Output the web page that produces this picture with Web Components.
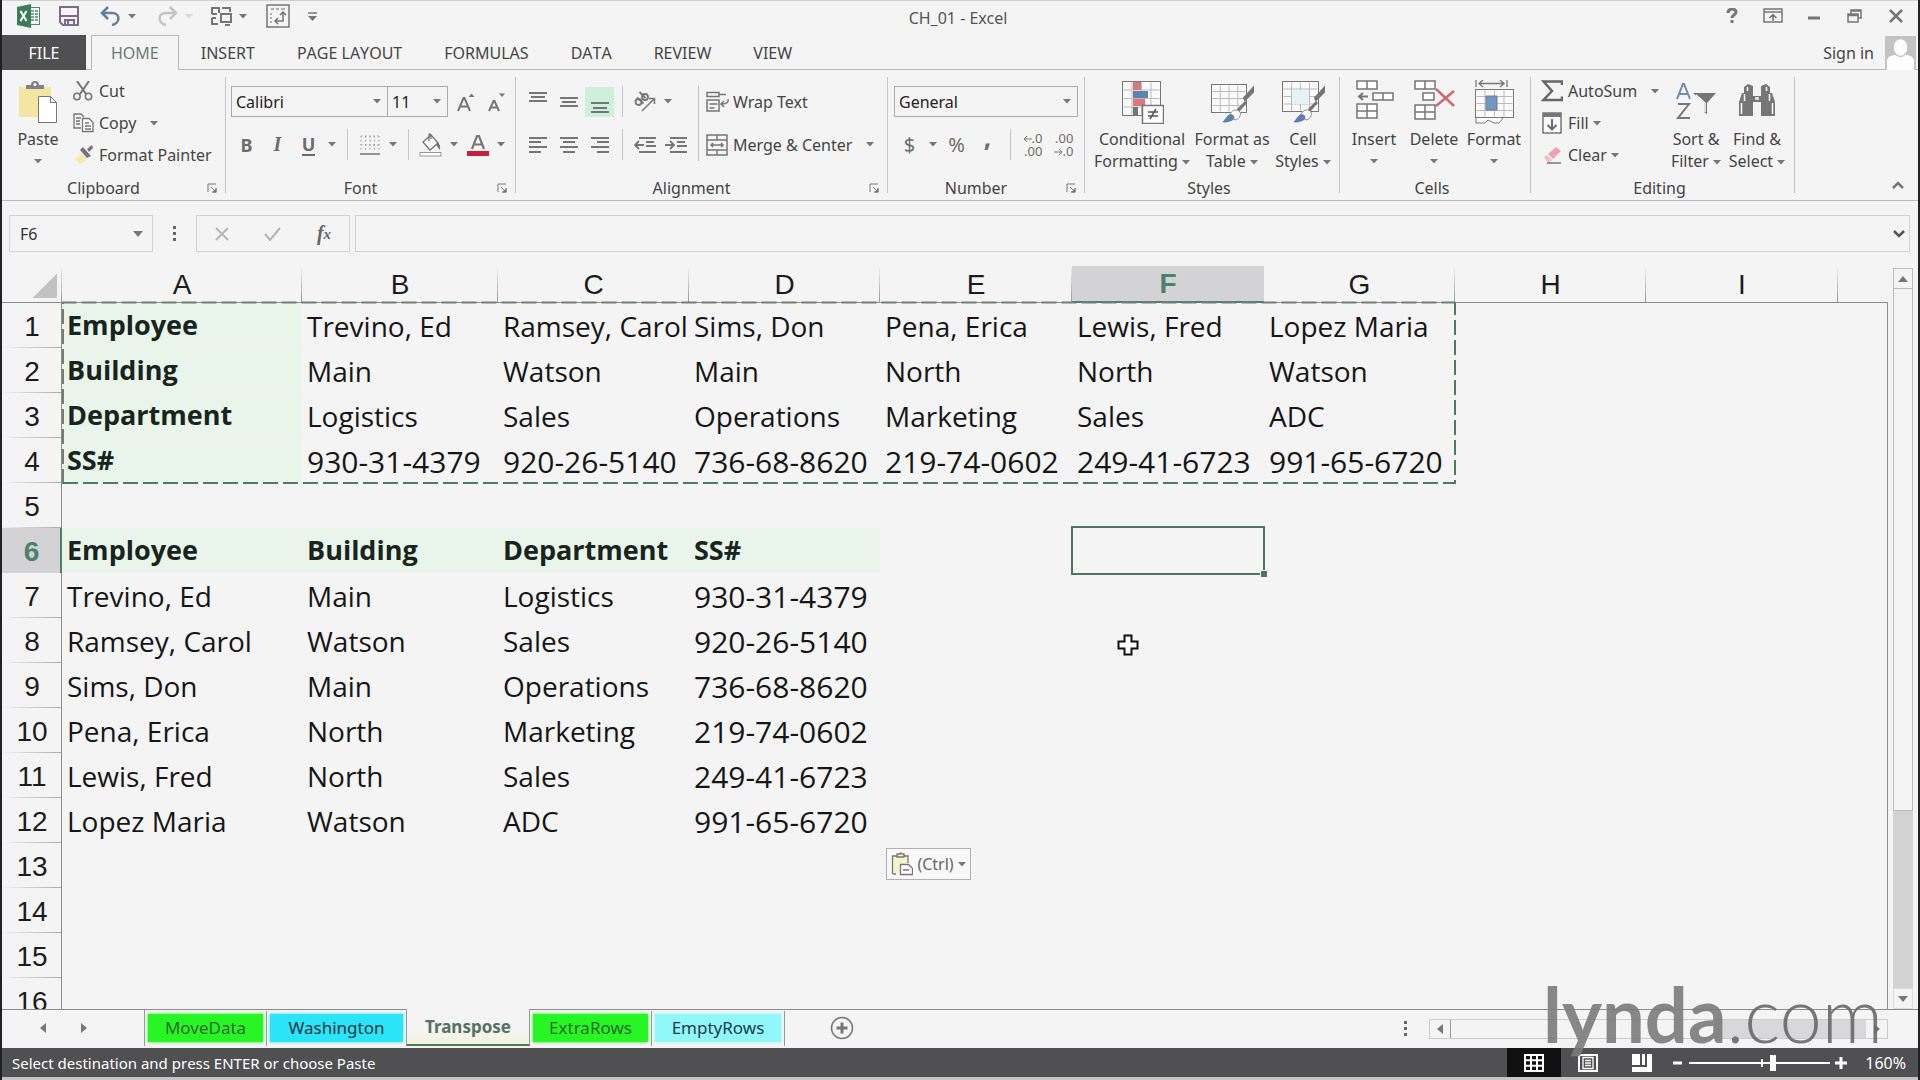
<!DOCTYPE html>
<html lang="en">
<head>
<meta charset="utf-8">
<title>CH_01 - Excel</title>
<style>
html, body { margin: 0; height: 100%; background: #f4f4f4; }
body { font: 16px/22px "Noto Sans", "Open Sans", sans-serif; color: #444; overflow: hidden; }
</style>
</head>
<body>
<xl-window>
  <xl-title-bar slot="title">CH_01 - Excel</xl-title-bar>
  <xl-tabs slot="tabs"></xl-tabs>
  <xl-ribbon slot="ribbon"></xl-ribbon>
  <xl-formula-bar slot="formula"></xl-formula-bar>
  <xl-sheet slot="sheet"></xl-sheet>
  <xl-sheet-tabs slot="sheets"></xl-sheet-tabs>
  <xl-status-bar slot="status">Select destination and press ENTER or choose Paste</xl-status-bar>
  <xl-watermark slot="mark"><b>lynda</b>.com</xl-watermark>
</xl-window>

<script>
const G = '#767676';
const brush = (c) => `<path d="M27 29l8-8 2 2-8 9z" fill="${G}"/><path d="M35 20l8-8v-4l-9 10z" fill="${G}" stroke="${G}" stroke-width="2"/><path d="M20 35c1-5 6-6 9-4s1 8-4 9z" fill="#fff" stroke="#888"/><path d="M12 42c3-1 4-7 9-8 3 1 5 4 2 6-3 2-8 3-11 2z" fill="${c}"/>`;
const grid = (x, y, w, h, nx, ny) => {
  let s = `<rect x="${x}" y="${y}" width="${w}" height="${h}" fill="#fafafa" stroke="#777"/>`;
  for (let i = 1; i < nx; i++) s += `<path d="M${x + w * i / nx} ${y + 1}v${h - 2}" stroke="#bbb"/>`;
  for (let i = 1; i < ny; i++) s += `<path d="M${x + 1} ${y + h * i / ny}h${w - 2}" stroke="#bbb"/>`;
  return s;
};
const lines = (arr) => `<path d="${arr.map(a => `M${a[0]} ${a[1]}h${a[2]}`).join('')}" stroke="${G}" stroke-width="2"/>`;
const ICONS = {
  caret: [8, 5, `<path d="M0 0h8l-4 4.500z" fill="${G}"/>`],
  excel: [24, 24, `<rect x="11.500" y="3.500" width="11" height="17" fill="#fff" stroke="#4b8a68"/><path d="M14 7h3m1 0h3M14 10h3m1 0h3M14 13h3m1 0h3M14 16h3m1 0h3" stroke="#4b8a68" stroke-width="1.500"/><path d="M0 3L14 0v24L0 21z" fill="#3d7c5a"/><path d="M3.500 7l6 10M9.500 7l-6 10" stroke="#fff" stroke-width="2"/>`],
  save: [20, 20, `<path d="M1 1h18v18H4l-3-3z" fill="none" stroke="#7d6b8e" stroke-width="2"/><path d="M2 10h16M6 19v-5h9v5M9 15v3" fill="none" stroke="#7d6b8e" stroke-width="2"/>`],
  undo: [21, 20, `<path d="M8 1L2 7l6 6" fill="none" stroke="#5b7ea8" stroke-width="2.500"/><path d="M3 7h9c9 0 8 11 0 12" fill="none" stroke="#6b7f98" stroke-width="2.500"/>`],
  redo: [21, 20, `<path d="M13 1l6 6-6 6M18 7H9C0 7 1 18 9 19" fill="none" stroke="#c4c4c4" stroke-width="2.500"/>`],
  groupobj: [22, 20, `<path d="M1 8V2h7v5M4 2h4M11 2h8v4M1 8h5M1 12v6h6M1 12h4M10 8h10v8H10zM14 19h5" fill="none" stroke="${G}" stroke-width="2"/>`],
  transp: [24, 24, `<rect x="1" y="1" width="22" height="22" fill="none" stroke="${G}" stroke-width="1.500"/><path d="M5 5h3M10 5h3M15 5h4M5 9v2M5 13v2M5 17v2" stroke="#999" stroke-width="1.500"/><path d="M17 8v9H9M14 11l3-3 3 3M12 14l-3 3 3 3" fill="none" stroke="${G}" stroke-width="1.500"/>`],
  qat: [9, 9, `<path d="M0 1h9" stroke="${G}" stroke-width="1.500"/><path d="M0 4h9l-4.500 5z" fill="${G}"/>`],
  help: [14, 16, `<path d="M3 5c0-5 8-5 8-1 0 3-4 3-4 6M7 12v3" fill="none" stroke="${G}" stroke-width="3"/>`],
  ribopt: [20, 16, `<path d="M1 1h18v13H1zM1 4h18M10 13V7M6.500 10L10 6.500l3.500 3.500" fill="none" stroke="${G}" stroke-width="1.500"/>`],
  min: [14, 16, `<path d="M1 10h12" stroke="${G}" stroke-width="3"/>`],
  restore: [16, 16, `<path d="M1 6h10v8H1zM1 7.500h10M4 6V2h10v8h-3M4 3h10" fill="none" stroke="${G}" stroke-width="1.500"/>`],
  close: [16, 16, `<path d="M2 2l12 12M14 2L2 14" stroke="${G}" stroke-width="2.500"/>`],
  user: [31, 34, `<path d="M0 0h31v34H0z" fill="#c3c3c3"/><path d="M2 34V24q1-4 7-5h13q6 1 7 5v10z" fill="#fdfdfd"/><ellipse cx="15.500" cy="11.500" rx="7.500" ry="9" fill="#fdfdfd" stroke="#c3c3c3" stroke-width="1.500"/>`],
  paste: [42, 44, `<path d="M2 7h32v30H2z" fill="#f3e6a2"/><path d="M9 9V5h5q0-4 4-4t4 4h5v4z" fill="#7d8188"/><circle cx="18" cy="4.500" r="1.500" fill="#fff"/><path d="M21.500 16.500h12l6 6v20h-18zM33.500 16.500v6h6" fill="#fff" stroke="${G}"/>`],
  cut: [20, 20, `<path d="M4 0l9 13M16 0L7 13" stroke="${G}" stroke-width="2"/><circle cx="4" cy="15.500" r="3.200" fill="none" stroke="${G}" stroke-width="1.500"/><circle cx="15.500" cy="15.500" r="3.200" fill="none" stroke="${G}" stroke-width="1.500"/>`],
  copy: [21, 20, `<path d="M8 15H1V1h7l3 3M3 5h5M3 8h4M3 11h4" fill="none" stroke="${G}" stroke-width="1.300"/><path d="M9.500 5.500H16l4 4v9H9.500zM12 10h4M12 13h6M12 16h6" fill="#fff" stroke="${G}" stroke-width="1.300"/>`],
  painter: [20, 20, `<path d="M2 14l6-6 6 7-7 4z" fill="#f2edae"/><path d="M7 5l3-3 8 9-4 2z" fill="#75727e"/><path d="M14 4l5-4 1 3-4 4z" fill="${G}"/>`],
  launch: [10, 10, `<path d="M1 9V1h8M4 4l5 5M9 5v4H5" fill="none" stroke="${G}"/><path d="M9.500 5v4.500H5z" fill="${G}"/>`],
  grow: [18, 20, `<path d="M1 19L6.500 6h1L13 19M3 14.500h8" fill="none" stroke="${G}" stroke-width="2"/><path d="M11.500 5l3-3.500 3 3.500z" fill="${G}"/>`],
  shrink: [18, 20, `<path d="M1 19l4.500-10h1L11 19M3 15.500h6.500" fill="none" stroke="${G}" stroke-width="2"/><path d="M11 1.500h6l-3 3.500z" fill="${G}"/>`],
  border: [20, 20, `<path d="M1 1h18M1 10h18M1 1v16M10 1v16M19 1v16M5.500 1v16M14.500 1v16" stroke="#999" stroke-dasharray="1.500 2.500" fill="none"/><path d="M0 19h20" stroke="${G}" stroke-width="1.500"/>`],
  fillc: [24, 24, `<path d="M4 9l8-7 7 8-8 7z" fill="#fff" stroke="${G}" stroke-width="1.300"/><path d="M10 8V2q0-2 2 0v4" fill="none" stroke="${G}" stroke-width="1.300"/><path d="M18 9q4 2 3 8l-4-5z" fill="${G}"/><rect x="1" y="19.500" width="21" height="3.500" fill="#fff" stroke="#999"/>`],
  fontc: [24, 24, `<path d="M6 16L11 3h2l5 13M8 11.500h8" fill="none" stroke="${G}" stroke-width="2.200"/><rect x="1" y="18" width="22" height="5" fill="#c8203c"/>`],
  atop: [20, 22, lines([[1, 2, 18], [3, 6, 14], [1, 10, 18]])],
  amid: [20, 22, lines([[1, 7, 18], [3, 11, 14], [1, 15, 18]])],
  abot: [20, 22, lines([[1, 12, 18], [3, 17, 14], [1, 21, 18]])],
  aleft: [20, 18, lines([[1, 2, 18], [1, 6, 12], [1, 11, 18], [1, 16, 12]])],
  acen: [20, 18, lines([[1, 2, 18], [4, 6, 12], [1, 11, 18], [4, 16, 12]])],
  aright: [20, 18, lines([[1, 2, 18], [7, 6, 12], [1, 11, 18], [7, 16, 12]])],
  orient: [24, 22, `<g fill="none" stroke="${G}" stroke-width="1.800"><circle cx="5.500" cy="11" r="3"/><path d="M4 6.500l6.500 6"/><circle cx="12" cy="6" r="3"/><path d="M6.500 1l6 6"/></g><path d="M9 20L21 8M16 7.500h5.500V13" fill="none" stroke="${G}" stroke-width="1.500"/>`],
  outd: [22, 18, lines([[5, 2, 17], [12, 6, 8], [12, 10, 10], [5, 16, 17]]) + `<path d="M10 9H1M5 5L1 9l4 4" fill="none" stroke="${G}" stroke-width="1.800"/>`],
  ind: [22, 18, lines([[5, 2, 17], [12, 6, 8], [12, 10, 10], [5, 16, 17]]) + `<path d="M0 9h8M5 5l4 4-4 4" fill="none" stroke="${G}" stroke-width="1.800"/>`],
  wrap: [23, 22, `<path d="M1 1.500h12v4H1zM13 3.500h7M1 9h12v11H1zM3.500 13h8M3.500 17h5" fill="none" stroke="${G}" stroke-width="1.500"/><path d="M22 8q1 5-6 5M18 10l-3 3 3 3" fill="none" stroke="${G}" stroke-width="1.500"/>`],
  merge: [22, 22, `<path d="M1 1h20v20H1zM11 1v5M11 16v5M1 6h20M1 16h20M5 11h12M7 9l-2 2 2 2M15 9l2 2-2 2" fill="none" stroke="${G}" stroke-width="1.500"/>`],
  cf: [44, 44, grid(2.5, 1.5, 38, 34, 4, 4) + `<rect x="13" y="2" width="8" height="8" fill="#d8777c"/><rect x="13" y="11" width="15" height="7" fill="#6083ad"/><rect x="13" y="19" width="12" height="7" fill="#d8777c"/><rect x="13" y="27" width="5" height="8" fill="${G}"/><path d="M22.500 25.500h21v18h-21z" fill="#fff" stroke="#777" stroke-width="1.500"/><path d="M28 32h10M28 36h10M36 29l-6 10" stroke="#555" stroke-width="1.500"/>`],
  fat: [44, 44, grid(1.5, 4.5, 35, 28, 4, 4) + brush('#5b83a8')],
  cst: [44, 44, grid(1.5, 1.5, 36, 30, 4, 4) + `<path d="M11 10h17v14H11z" fill="#e6f2f5"/>` + brush('#5f7bb5')],
  ins: [44, 44, `<g fill="#fff" stroke="${G}" stroke-width="1.500"><path d="M5 1h20v8H5zM15 1v8M21 13h20v7H21zM31 13v7M5 24h20v14H5zM15 24v14M5 31h20"/><path d="M16 16.500H7M11 13l-4 3.500 4 3.500" fill="none" stroke-width="2"/></g>`],
  del: [44, 44, `<g fill="#fff" stroke="${G}" stroke-width="1.500"><path d="M3 1h20v8H3zM13 1v8M11 13h11v7H11zM3 25h20v14H3zM13 25v14M3 32h20"/></g><path d="M24 9l18 17M42 11L24 26" stroke="#cf6a6a" stroke-width="2.500"/>`],
  fmt: [44, 44, `<path d="M4 0v7M35 0v7M7 3.500h25M11 0L7 3.500 11 7M28 0l4 3.500L28 7" fill="none" stroke="${G}" stroke-width="1.300"/>` + grid(3.5, 9.5, 38, 28, 4, 4) + `<path d="M14 16h11v14H14z" fill="#7297c0" stroke="#6b7a90"/><path d="M4 38v5h9l3-3 6 3h5l4-5" fill="#fff" stroke="${G}"/>`],
  sum: [22, 22, `<path d="M21 5V1.500H2.500L11 11 2.500 20H21v-3.500" fill="none" stroke="#666" stroke-width="2.500"/>`],
  fill: [20, 22, `<rect x="1" y="1" width="18" height="20" fill="#fff" stroke="${G}" stroke-width="1.500"/><path d="M1 1h18v4H1z" fill="${G}"/><path d="M10 7v10M5.500 13l4.500 4.500 4.500-4.500" fill="none" stroke="#666a80" stroke-width="2"/>`],
  clear: [20, 20, `<path d="M6 9l8-7 5 4-8 8z" fill="#eda3b5"/><path d="M2 12l3-2 5 5-2 2H5z" fill="#ecc0cb"/><path d="M5 18h14" stroke="${G}" stroke-width="1.500"/>`],
  sort: [44, 44, `<path d="M3 19L9 4h1l6 15M5.500 14h8" fill="none" stroke="#6f8ba8" stroke-width="2"/><path d="M4 24h11L4 38h12" fill="none" stroke="${G}" stroke-width="2"/><path d="M19 13h23L33 23v11l-3-2v-9z" fill="${G}"/><path d="M22 15l9 8v9" fill="none" stroke="#fff" stroke-width="1.500"/>`],
  find: [44, 44, `<path d="M4 36V22l3-9h2V7l4-3 5 2v10h8V6l5-2 4 3v6h2l3 9v14H26V22h-8v14z" fill="${G}"/><path d="M6.500 34V23M9.500 21v-7M12.500 11V7M37.500 34V23M34.500 21v-7M31.500 11V7M21 17v3M23 17v3" stroke="#fff" stroke-width="1.500"/>`],
  up: [14, 8, `<path d="M2 7l5-5 5 5" fill="none" stroke="${G}" stroke-width="2.500"/>`],
  down: [14, 8, `<path d="M2 1l5 5 5-5" fill="none" stroke="#555" stroke-width="2.500"/>`],
  dots: [4, 16, `<path d="M0 0h3v3H0zM0 6h3v3H0zM0 12h3v3H0z" fill="#666"/>`],
  x: [14, 14, `<path d="M1 1l12 12M13 1L1 13" stroke="#b5b5b5" stroke-width="1.800"/>`],
  check: [18, 14, `<path d="M1 7l5 6L16 1" fill="none" stroke="#b5b5b5" stroke-width="2"/>`],
  pasteopt: [22, 24, `<path d="M2 3h15v9H9v9H2z" fill="#f5f3cf"/><path d="M2 22h3M1.500 22V4H6M13 4h4v7M6 5V2h3q0-2 2 0h2v3z" fill="none" stroke="#777" stroke-width="1.300"/><path d="M9.500 12.500h8l4 4v6h-12zM12 18h6" fill="#fff" stroke="#777" stroke-width="1.300"/>`],
  plus: [24, 24, `<circle cx="12" cy="12" r="10.500" fill="none" stroke="${G}" stroke-width="1.500"/><path d="M12 6.500v11M6.500 12h11" stroke="${G}" stroke-width="3"/>`],
  tleft: [6, 10, `<path d="M6 0v10L0 5z" fill="#777"/>`],
  tright: [6, 10, `<path d="M0 0v10l6-5z" fill="#777"/>`],
  tup: [10, 6, `<path d="M0 6h10L5 0z" fill="#777"/>`],
  tdown: [10, 6, `<path d="M0 0h10L5 6z" fill="#777"/>`],
  vnorm: [20, 18, `<path d="M1 1h18v16H1zM7 1v16M13 1v16M1 6.300h18M1 11.700h18" fill="none" stroke="#fff" stroke-width="2"/>`],
  vpage: [20, 18, `<path d="M1 1h18v16H1z" fill="none" stroke="#fff" stroke-width="2"/><path d="M5 3.500h10v11H5zM7 6.500h6M7 9h6M7 11.500h6" fill="none" stroke="#fff" stroke-width="1.300"/>`],
  vbreak: [20, 18, `<path d="M0 0h8v11H0zM10 0h3v11h-3zM15 0h5v18H0v-5h15z" fill="#fff"/>`],
  zout: [12, 12, `<path d="M1 6h9" stroke="#fff" stroke-width="3"/>`],
  zin: [12, 12, `<path d="M0 6h12M6 0v12" stroke="#fff" stroke-width="3"/>`],
  cross: [22, 22, `<path d="M7.500 1.500h7v6h6v7h-6v6h-7v-6h-6v-7h6z" fill="#fff" stroke="#111" stroke-width="2"/>`]
};

const define = (name, html, init) => {
  const t = document.createElement('template');
  t.innerHTML = html;
  customElements.define(name, class extends HTMLElement {
    constructor() {
      super();
      this.attachShadow({ mode: 'open' }).append(t.content.cloneNode(true));
    }
    connectedCallback() { if (init) init(this, this.shadowRoot); }
  });
};

const RESET = `
  *{box-sizing:border-box}
  button,input,select{font:inherit;color:inherit;background:none;border:0;margin:0;padding:0;border-radius:0;outline:0}
  select{appearance:none}`;

define('xl-icon', `<style>:host{display:inline-flex;flex:none}svg{display:block}</style>`, (el, root) => {
  const icon = ICONS[el.getAttribute('name')];
  if (!icon || root.querySelector('svg')) return;
  const [w, h, body] = icon;
  root.innerHTML += `<svg width="${w}" height="${h}" viewBox="0 0 ${w} ${h}" aria-hidden="true">${body}</svg>`;
});

/* Compact icon-only control */
define('xl-tool', `<style>${RESET}
  :host{display:flex;flex:none;width:31px;height:30px}
  :host([caret]){width:16px}
  :host([on]){background:#cdf0dc;width:29px;margin:0 1px}
  button{flex:1;display:flex;align-items:center;justify-content:center;color:#6d6d6d;font-size:20px}
</style><button type="button"><slot></slot></button>`, (el, root) => {
  root.querySelector('button').setAttribute('aria-label', el.getAttribute('label') || 'More');
  if (el.hasAttribute('caret') && !el.childElementCount) el.innerHTML = '<xl-icon name="caret"></xl-icon>';
});

/* Labelled ribbon command, "big" puts the icon over the text */
define('xl-command', `<style>${RESET}
  :host{display:flex;flex:none}
  button{flex:1;display:flex;align-items:center;height:32px;gap:4px;white-space:nowrap}
  .i{width:24px;display:flex;justify-content:center}
  .c{display:none}
  :host([menu]) .c{display:flex}
  :host([far]) .c{margin-left:10px}
  :host([big]) button{flex-direction:column;height:auto;gap:0;text-align:center}
  :host([big]) .i{width:auto;height:53px;align-items:center}
  :host([big][menu]) .c{height:22px;align-items:center}
</style><button type="button"><span class="i"></span><span><slot></slot></span><span class="c"><xl-icon name="caret"></xl-icon></span></button>`,
  (el, root) => {
    root.querySelector('.i').innerHTML = `<xl-icon name="${el.getAttribute('icon')}"></xl-icon>`;
  });

define('xl-select', `<style>${RESET}
  :host{display:grid;flex:none;height:31px;border:1px solid #ababab;color:#222}
  select,span{grid-area:1/1;min-width:0}
  select{padding:0 20px 0 4px;width:100%}
  span{justify-self:end;align-self:center;display:flex;margin-right:6px;pointer-events:none}
</style><select></select><span><xl-icon name="caret"></xl-icon></span>`, (el, root) => {
  const s = root.querySelector('select');
  s.setAttribute('aria-label', el.getAttribute('label'));
  s.innerHTML = `<option>${el.getAttribute('value')}</option>`;
});

define('xl-sep', `<style>:host{display:flex;flex:none;width:14px;justify-content:center;align-self:stretch}i{width:1px;background:#c6c6c6}</style><i></i>`);

define('xl-group', `<style>${RESET}
  :host{display:flex;flex-direction:column;flex:none;position:relative;height:130px}
  :host::after{content:"";position:absolute;right:0;top:7px;bottom:7px;width:1px;background:#c6c6c6}
  .body{height:102px;display:flex;padding:5px 0 0 var(--pad,5px)}
  footer{display:flex;align-items:center;height:28px;padding:3px 7px 0 0}
  footer span{flex:1;text-align:center}
  button{display:none;width:14px;padding:2px;height:14px}
  :host([launcher]) button{display:flex}
</style><div class="body"><slot></slot></div><footer><span></span><button type="button" aria-label="Dialog launcher"><xl-icon name="launch"></xl-icon></button></footer>`,
  (el, root) => { root.querySelector('footer span').textContent = el.getAttribute('label'); });

define('xl-ribbon', `<style>${RESET}
  :host{display:flex;border-bottom:1px solid #b9b9b9;height:130px}
  .col{display:flex;flex-direction:column}
  .rows{display:flex;flex-direction:column;gap:12px;padding-top:11px}
  .row{display:flex;height:31px;align-items:center}
  .block{display:flex;padding:11px 0}
  .rest{flex:1;display:flex;justify-content:flex-end;align-items:flex-end;padding:0 13px 6px 0}
  .bold{font-weight:700;font-size:18px}
  .it{font:italic 700 20px "Liberation Serif",serif}
  .un{font-weight:700;font-size:18px;border-bottom:2px solid #6d6d6d;line-height:20px}
  .dec{font-size:13px;line-height:13px;text-align:right}
  .comma{font-weight:700;font-size:26px;line-height:14px;padding-bottom:16px}
</style>
<xl-group label="Clipboard" launcher style="width:224px;--pad:8px">
  <xl-command big menu icon="paste" style="width:56px">Paste</xl-command>
  <div class="col" style="padding-left:5px">
    <xl-command icon="cut">Cut</xl-command>
    <xl-command icon="copy" menu far>Copy</xl-command>
    <xl-command icon="painter">Format Painter</xl-command>
  </div>
</xl-group>
<xl-group label="Font" launcher style="width:290px">
  <div class="rows">
    <div class="row"><xl-select label="Font" value="Calibri" style="width:157px"></xl-select><xl-select label="Font size" value="11" style="width:61px;margin-left:-1px"></xl-select>
      <xl-tool label="Increase font size" style="margin-left:2px"><xl-icon name="grow"></xl-icon></xl-tool><xl-tool label="Decrease font size"><xl-icon name="shrink"></xl-icon></xl-tool></div>
    <div class="row"><xl-tool label="Bold"><span class="bold">B</span></xl-tool><xl-tool label="Italic"><span class="it">I</span></xl-tool><xl-tool label="Underline"><span class="un">U</span></xl-tool><xl-tool caret></xl-tool><xl-sep></xl-sep><xl-tool label="Borders"><xl-icon name="border"></xl-icon></xl-tool><xl-tool caret></xl-tool><xl-sep></xl-sep><xl-tool label="Fill colour"><xl-icon name="fillc"></xl-icon></xl-tool><xl-tool caret></xl-tool><xl-tool label="Font colour"><xl-icon name="fontc"></xl-icon></xl-tool><xl-tool caret></xl-tool></div>
  </div>
</xl-group>
<xl-group label="Alignment" launcher style="width:372px;--pad:6px">
  <div class="rows">
    <div class="row"><xl-tool label="Top align"><xl-icon name="atop"></xl-icon></xl-tool><xl-tool label="Middle align"><xl-icon name="amid"></xl-icon></xl-tool><xl-tool on label="Bottom align"><xl-icon name="abot"></xl-icon></xl-tool><xl-sep></xl-sep><xl-tool label="Orientation"><xl-icon name="orient"></xl-icon></xl-tool><xl-tool caret></xl-tool></div>
    <div class="row"><xl-tool label="Align left"><xl-icon name="aleft"></xl-icon></xl-tool><xl-tool label="Centre"><xl-icon name="acen"></xl-icon></xl-tool><xl-tool label="Align right"><xl-icon name="aright"></xl-icon></xl-tool><xl-sep></xl-sep><xl-tool label="Decrease indent"><xl-icon name="outd"></xl-icon></xl-tool><xl-tool label="Increase indent"><xl-icon name="ind"></xl-icon></xl-tool></div>
  </div>
  <div class="block"><xl-sep></xl-sep></div>
  <div class="rows">
    <div class="row"><xl-command icon="wrap">Wrap Text</xl-command></div>
    <div class="row"><xl-command icon="merge" menu far>Merge &amp; Center</xl-command></div>
  </div>
</xl-group>
<xl-group label="Number" launcher style="width:197px;--pad:6px">
  <div class="rows">
    <div class="row"><xl-select label="Number format" value="General" style="width:184px"></xl-select></div>
    <div class="row"><xl-tool label="Currency">$</xl-tool><xl-tool caret></xl-tool><xl-tool label="Percent">%</xl-tool><xl-tool label="Comma"><span class="comma">,</span></xl-tool><xl-sep></xl-sep><xl-tool label="Increase decimal"><span class="dec"><svg width="9" height="8"><path d="M9 4H1M4 1L1 4l3 3" fill="none" stroke="#767676"/></svg>.0<br>.00</span></xl-tool><xl-tool label="Decrease decimal"><span class="dec">.00<br><svg width="9" height="8"><path d="M0 4h8M5 1l3 3-3 3" fill="none" stroke="#767676"/></svg>.0</span></xl-tool></div>
  </div>
</xl-group>
<xl-group label="Styles" style="width:255px;--pad:9px">
  <xl-command big icon="cf" style="width:96px">Conditional<br>Formatting <xl-icon name="caret" style="vertical-align:middle"></xl-icon></xl-command>
  <xl-command big icon="fat" style="width:84px">Format as<br>Table <xl-icon name="caret" style="vertical-align:middle"></xl-icon></xl-command>
  <xl-command big icon="cst" style="width:58px">Cell<br>Styles <xl-icon name="caret" style="vertical-align:middle"></xl-icon></xl-command>
</xl-group>
<xl-group label="Cells" style="width:191px;--pad:4px">
  <xl-command big menu icon="ins" style="width:60px">Insert</xl-command>
  <xl-command big menu icon="del" style="width:60px">Delete</xl-command>
  <xl-command big menu icon="fmt" style="width:60px">Format</xl-command>
</xl-group>
<xl-group label="Editing" style="width:264px;--pad:9px">
  <div class="col" style="width:126px">
    <xl-command icon="sum" menu far>AutoSum</xl-command>
    <xl-command icon="fill" menu>Fill</xl-command>
    <xl-command icon="clear" menu>Clear</xl-command>
  </div>
  <xl-command big icon="sort" style="width:60px">Sort &amp;<br>Filter <xl-icon name="caret" style="vertical-align:middle"></xl-icon></xl-command>
  <xl-command big icon="find" style="width:62px">Find &amp;<br>Select <xl-icon name="caret" style="vertical-align:middle"></xl-icon></xl-command>
</xl-group>
<div class="rest"><button type="button" aria-label="Collapse the ribbon"><xl-icon name="up"></xl-icon></button></div>`);

define('xl-title-bar', `<style>${RESET}
  :host{display:grid;grid-template-columns:1fr auto 1fr;align-items:center;height:34px}
  .q,.w{display:flex;align-items:center}
  .q{padding:0 0 4px 15px}
  .w{justify-content:flex-end;padding:0 2px 4px 0}
  .w button{width:41px;height:30px;display:flex;align-items:center;justify-content:center}
  button{display:flex}
  h1{font:inherit;margin:0;color:#555;padding:0 4px 1px 0}
</style>
<div class="q">
  <xl-icon name="excel"></xl-icon>
  <button type="button" aria-label="Save" style="margin-left:18px"><xl-icon name="save"></xl-icon></button>
  <button type="button" aria-label="Undo" style="margin-left:21px"><xl-icon name="undo"></xl-icon></button>
  <button type="button" aria-label="Undo list" style="margin-left:7px"><xl-icon name="caret"></xl-icon></button>
  <button type="button" aria-label="Redo" style="margin-left:21px"><xl-icon name="redo"></xl-icon></button>
  <button type="button" aria-label="Redo list" style="margin-left:7px;opacity:.2"><xl-icon name="caret"></xl-icon></button>
  <button type="button" aria-label="Group" style="margin-left:18px"><xl-icon name="groupobj"></xl-icon></button>
  <button type="button" aria-label="Group list" style="margin-left:6px"><xl-icon name="caret"></xl-icon></button>
  <button type="button" aria-label="Select visible cells" style="margin-left:19px"><xl-icon name="transp"></xl-icon></button>
  <button type="button" aria-label="Customize toolbar" style="margin-left:18px"><xl-icon name="qat"></xl-icon></button>
</div>
<h1><slot></slot></h1>
<div class="w">
  <button type="button" aria-label="Help"><xl-icon name="help"></xl-icon></button>
  <button type="button" aria-label="Ribbon options"><xl-icon name="ribopt"></xl-icon></button>
  <button type="button" aria-label="Minimize"><xl-icon name="min"></xl-icon></button>
  <button type="button" aria-label="Restore"><xl-icon name="restore"></xl-icon></button>
  <button type="button" aria-label="Close"><xl-icon name="close"></xl-icon></button>
</div>`);

define('xl-tabs', `<style>${RESET}
  :host{display:flex;height:35px;box-shadow:inset 0 -1px #b9b9b9;font-kerning:none}
  nav{display:flex;gap:2px}
  button{padding:0 20px;display:flex;align-items:center;color:#444}
  .file{background:#505052;color:#fff;width:84px;padding:0;justify-content:center;margin-right:3px}
  .on{border:1px solid #b9b9b9;border-bottom:0;background:#f4f4f4;color:#6c7a72;padding:0 19px}
  .me{margin-left:auto;display:flex;align-items:center;gap:11px;padding-right:2px}
  .me button{padding:0}
</style>
<nav><button type="button" class="file">FILE</button><button type="button" class="on">HOME</button><button type="button">INSERT</button><button type="button">PAGE LAYOUT</button><button type="button">FORMULAS</button><button type="button">DATA</button><button type="button">REVIEW</button><button type="button">VIEW</button></nav>
<div class="me"><button type="button">Sign in</button><xl-icon name="user"></xl-icon></div>`);

define('xl-formula-bar', `<style>${RESET}
  :host{display:flex;align-items:center;padding:14px 8px 14px 7px;color:#333}
  .box{height:37px;border:1px solid #d2d2d2;display:flex;align-items:center}
  .name{width:144px;padding:0 9px 0 10px}
  .name input{flex:1;min-width:0}
  .dots{width:43px;display:flex;justify-content:center}
  .acts{width:154px;padding:0 11px;justify-content:space-between}
  .acts button{width:28px;height:30px;display:flex;align-items:center;justify-content:center}
  .fx{font:italic 700 20px "Liberation Serif",serif;color:#666}
  .fx sub{font-size:15px;line-height:0;vertical-align:baseline}
  .in{flex:1;margin-left:5px;padding:0 3px 4px 0}
  .in input{flex:1}
</style>
<div class="box name"><input aria-label="Name box" value="F6"><xl-icon name="tdown"></xl-icon></div>
<span class="dots"><xl-icon name="dots"></xl-icon></span>
<div class="box acts"><button type="button" aria-label="Cancel"><xl-icon name="x"></xl-icon></button><button type="button" aria-label="Enter"><xl-icon name="check"></xl-icon></button><button type="button" class="fx" aria-label="Insert function">f<sub>x</sub></button></div>
<div class="box in"><input aria-label="Formula"><button type="button" aria-label="Expand"><xl-icon name="down"></xl-icon></button></div>`);

const SHEET = [
  ['*Employee', 'Trevino, Ed', 'Ramsey, Carol', 'Sims, Don', 'Pena, Erica', 'Lewis, Fred', 'Lopez Maria'],
  ['*Building', 'Main', 'Watson', 'Main', 'North', 'North', 'Watson'],
  ['*Department', 'Logistics', 'Sales', 'Operations', 'Marketing', 'Sales', 'ADC'],
  ['*SS#', '930-31-4379', '920-26-5140', '736-68-8620', '219-74-0602', '249-41-6723', '991-65-6720'],
  [],
  ['*Employee', '*Building', '*Department', '*SS#'],
  ['Trevino, Ed', 'Main', 'Logistics', '930-31-4379'],
  ['Ramsey, Carol', 'Watson', 'Sales', '920-26-5140'],
  ['Sims, Don', 'Main', 'Operations', '736-68-8620'],
  ['Pena, Erica', 'North', 'Marketing', '219-74-0602'],
  ['Lewis, Fred', 'North', 'Sales', '249-41-6723'],
  ['Lopez Maria', 'Watson', 'ADC', '991-65-6720'],
  [], [], [], []
];

define('xl-sheet', `<style>${RESET}
  :host{display:flex;min-height:0;overflow:hidden}
  .pane{flex:1;min-width:0;position:relative;overflow:hidden}
  .pane::after{content:"";position:absolute;right:0;top:36px;bottom:0;width:1px;background:#8c8c8c}
  table{table-layout:fixed;width:100%;border-collapse:separate;border-spacing:0}
  th{font:28px/34px "Liberation Sans",Arial,sans-serif;color:#1c1c1c;padding:0;text-align:center}
  thead th{height:37px;padding-top:2px;border-bottom:1px solid #8c8c8c;background:linear-gradient(transparent,#999) right/1px 100% no-repeat}
  thead th.sel{background:#d3d3d6;border-bottom:2px solid #4f8068;color:#4f8068;font-weight:700;padding-top:1px}
  tbody th{height:45px;padding:2px 0 0 1px;border-right:1px solid #8c8c8c;background:linear-gradient(90deg,transparent,#aaa) bottom/100% 1px no-repeat}
  tbody th.sel{background:#d3d3d6;border-right:2px solid #4f8068;color:#4f8068;font-weight:700}
  thead th:first-child{padding:0;vertical-align:bottom}
  .corner{display:block;width:24px;height:24px;margin:0 5px 4px auto;background:linear-gradient(135deg,transparent 50%,#c2c2c2 50%)}
  td{font:28px/43px "Open Sans","Noto Sans",sans-serif;color:#161616;height:45px;padding:2px 0 0 5px;white-space:nowrap;position:relative}
  td.h{font-weight:700;font-size:27px;line-height:42px;padding:1px 0 1px 5px;background:#e9f5ea;border-right:1px solid #eef3ee;border-bottom:1px solid #eef3ee;color:#18241c}
  td.n{font-size:30px;line-height:42px}
  .cursor{position:absolute;inset:-2px -1px;border:2px solid #4d7362}
  .cursor::after{content:"";position:absolute;right:-4px;bottom:-4px;width:6px;height:6px;background:#4d7362;border:1px solid #f4f4f4;border-width:1px 0 0 1px;box-sizing:content-box}
  .ants{position:absolute;left:60px;top:35px;width:1394px;height:183px;overflow:visible;pointer-events:none}
  .mouse{position:absolute;left:1115px;top:368px}
  .opt{position:absolute;left:884px;top:582px;width:85px;height:32px;border:1px solid #b0b0b0;display:flex;align-items:center;justify-content:center;gap:4px;color:#666;background:#f8f8f8}
  .bar{width:30px;display:flex;flex-direction:column;padding:2px 5px 0;flex:none}
  .bar button{height:21px;border:1px solid #bbb;display:flex;align-items:center;justify-content:center;flex:none}
  .thumb{flex:523;border:1px solid #bbb;border-top:0}
  .track{flex:178;background:#d2d2d2}
  .bar .last{border-color:#ddd}
</style>
<div class="pane">
  <table><colgroup><col style="width:60px"><col style="width:240px"><col style="width:196px"><col style="width:191px"><col style="width:191px"><col style="width:192px"><col style="width:192px"><col style="width:191px"><col style="width:191px"><col style="width:192px"><col></colgroup><thead></thead><tbody></tbody></table>
  <svg class="ants"><path d="M1 183V1.500H1393" fill="none" stroke="#6e7f76" stroke-width="2" stroke-dasharray="15 5"/><path d="M1 182H1393V1" fill="none" stroke="#4d7a63" stroke-width="2" stroke-dasharray="15 5"/></svg>
  <xl-icon class="mouse" name="cross"></xl-icon>
  <button type="button" class="opt"><xl-icon name="pasteopt"></xl-icon>(Ctrl)<xl-icon name="caret"></xl-icon></button>
</div>
<div class="bar"><button type="button" aria-label="Scroll up"><xl-icon name="tup"></xl-icon></button><div class="thumb"></div><div class="track"></div><button type="button" class="last" aria-label="Scroll down"><xl-icon name="tdown"></xl-icon></button></div>`,
  (el, root) => {
    root.querySelector('thead').innerHTML = '<tr><th><span class="corner"></span></th>' + [...'ABCDEFGHI'].map(c => `<th scope="col"${c === 'F' ? ' class="sel"' : ''}>${c}</th>`).join('') + '<th style="background:none"></th></tr>';
    root.querySelector('tbody').innerHTML = SHEET.map((r, y) => {
      let s = `<tr><th scope="row"${y === 5 ? ' class="sel"' : ''}>${y + 1}</th>`;
      for (let x = 0; x < 10; x++) {
        const v = r[x] || '';
        const cls = v[0] === '*' ? 'h' : /^\d/.test(v) ? 'n' : '';
        s += `<td class="${cls}">${v.replace('*', '')}${y === 5 && x === 5 ? '<span class="cursor"></span>' : ''}</td>`;
      }
      return s + '</tr>';
    }).join('');
  });

define('xl-sheet-tab', `<style>${RESET}
  :host{display:flex;flex:none;padding:3px 3px 4px;border-right:1px solid #999;height:35px;margin-top:1px}
  button{flex:1;background:var(--tab);color:var(--ink,#333);font-size:17px;box-shadow:0 0 3px var(--tab)}
  :host([on]){padding:0;margin-top:-1px;height:37px;border-bottom:2px solid #4d7a5a;background:#f4f4f4;border-left:1px solid #999}
  :host([on]) button{font-weight:700;color:#587060;box-shadow:none;background:linear-gradient(#f4f4f4 60%,#f2f3dc)}
</style><button type="button"><slot></slot></button>`);

define('xl-sheet-tabs', `<style>${RESET}
  :host{display:flex;height:38px;border-top:1px solid #8c8c8c;align-items:flex-start}
  .nav{width:143px;height:36px;display:flex;align-items:center;padding-left:38px;gap:35px;border-right:1px solid #999}
  .add{margin:6px 0 0 45px;display:flex}
  .right{margin-left:auto;display:flex;align-items:center;padding:9px 30px 0 0}
  .h{display:flex;width:459px;height:20px;border:1px solid #ccc;margin-left:21px}
  .h button{width:21px;display:flex;align-items:center;justify-content:center}
  .h .l{border-right:1px solid #999}
  .t{flex:265}.k{flex:152;background:#d8d8da}
</style>
<div class="nav"><xl-icon name="tleft"></xl-icon><xl-icon name="tright"></xl-icon></div>
<xl-sheet-tab style="width:122px;--tab:#27f524;--ink:#2c6b30">MoveData</xl-sheet-tab>
<xl-sheet-tab style="width:139px;--tab:#2be4f7;--ink:#1c3440;border:0">Washington</xl-sheet-tab>
<xl-sheet-tab on style="width:124px">Transpose</xl-sheet-tab>
<xl-sheet-tab style="width:122px;--tab:#27f524;--ink:#2c6b30">ExtraRows</xl-sheet-tab>
<xl-sheet-tab style="width:133px;--tab:#90f8f8;--ink:#1c3a50">EmptyRows</xl-sheet-tab>
<button type="button" class="add" aria-label="New sheet"><xl-icon name="plus"></xl-icon></button>
<div class="right"><xl-icon name="dots"></xl-icon><div class="h"><button type="button" class="l" aria-label="Scroll left"><xl-icon name="tleft"></xl-icon></button><div class="t"></div><div class="k"></div><button type="button" aria-label="Scroll right"><xl-icon name="tright"></xl-icon></button></div></div>`);

define('xl-status-bar', `<style>${RESET}
  :host{display:flex;align-items:center;height:29px;background:#505052;color:#fff;border-bottom:3px solid #c4c4c4;padding-left:10px}
  .msg{flex:1;font-size:15px;font-kerning:none}
  .v{width:54px;height:29px;display:flex;align-items:center;justify-content:center}
  .on{background:#111}
  input{appearance:none;width:141px;height:20px;margin:0 2px;background:linear-gradient(#fff,#fff) center/100% 2px no-repeat,linear-gradient(#fff,#fff) 72px 50%/2px 8px no-repeat}
  input::-webkit-slider-thumb{appearance:none;width:6px;height:16px;background:#fff}
  .z{width:18px;height:20px;display:flex;align-items:center;justify-content:center}
  .p{width:68px;text-align:right;padding-right:12px;}
</style>
<span class="msg"><slot></slot></span>
<button type="button" class="v on" aria-label="Normal view"><xl-icon name="vnorm"></xl-icon></button><button type="button" class="v" aria-label="Page layout view"><xl-icon name="vpage"></xl-icon></button><button type="button" class="v" aria-label="Page break view"><xl-icon name="vbreak"></xl-icon></button>
<button type="button" class="z" aria-label="Zoom out"><xl-icon name="zout"></xl-icon></button><input type="range" min="0" max="100" value="60" aria-label="Zoom"><button type="button" class="z" aria-label="Zoom in"><xl-icon name="zin"></xl-icon></button><span class="p">160%</span>`);

define('xl-watermark', `<style>
  :host{display:block;position:absolute;right:35px;bottom:28px;font:300 76px/76px Lato,sans-serif;color:#6a6a6a;opacity:.9;pointer-events:none}
  ::slotted(b){font-weight:700;color:#7c7c7c}
</style><slot></slot>`);

define('xl-window', `<style>
  :host{display:flex;flex-direction:column;height:100vh;box-sizing:border-box;position:relative;border:solid #202124;border-width:0 2px;box-shadow:inset 0 1px #cfcfcf;padding-top:1px}
  ::slotted(*){flex:none}
  ::slotted(xl-sheet){flex:1}
</style>
<slot name="title"></slot><slot name="tabs"></slot><slot name="ribbon"></slot><slot name="formula"></slot><slot name="sheet"></slot><slot name="sheets"></slot><slot name="status"></slot><slot name="mark"></slot>`);
</script>
</body>
</html>
